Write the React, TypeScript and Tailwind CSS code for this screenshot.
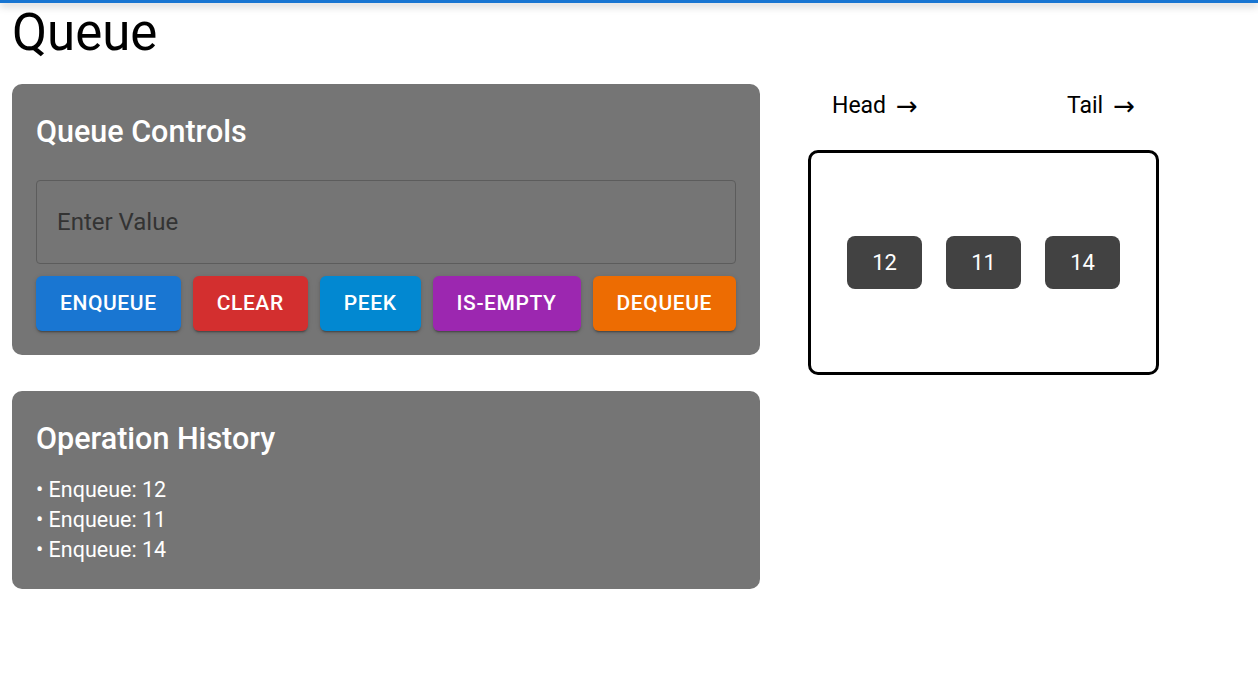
import React from "react";

const buttons = [
  { label: "Enqueue", cls: "bg-[#1976d2]" },
  { label: "Clear", cls: "bg-[#d32f2f]" },
  { label: "Peek", cls: "bg-[#0288d1]" },
  { label: "Is-Empty", cls: "bg-[#9c27b0]" },
  { label: "Dequeue", cls: "bg-[#ed6c02]" },
];

const queue = [12, 11, 14];

export default function App() {
  return (
    <div className="min-h-screen w-full bg-white text-black font-['Roboto',sans-serif]">
      <div className="h-[3px] w-full bg-[#1976d2] shadow-[0_2px_8px_rgba(0,0,0,0.35)]"></div>
      <div className="px-3">
        <h1 className="mt-[2px] text-[51px] leading-[56px] font-normal">Queue</h1>

        <div className="mt-[23px] flex items-start gap-12">
          {/* left column */}
          <div className="flex w-[748px] flex-col gap-9">
            <div className="rounded-[10px] bg-[#757575] px-6 pt-6 pb-6">
              <h2 className="text-[30.5px] leading-[48px] font-medium text-white">Queue Controls</h2>
              <input
                placeholder="Enter Value"
                className="mt-6 h-[84px] w-full rounded-[4px] border border-[#5c5c5c] bg-transparent px-[20px] text-[24px] text-[#222] outline-none placeholder:text-[#333]"
              />
              <div className="mt-3 flex justify-between">
                {buttons.map((b) => (
                  <button
                    key={b.label}
                    className={`h-[55px] rounded-[6px] px-6 text-[21px] font-medium uppercase tracking-[0.02857em] text-white shadow-[0_3px_1px_-2px_rgba(0,0,0,0.2),0_2px_2px_0_rgba(0,0,0,0.14),0_1px_5px_0_rgba(0,0,0,0.12)] ${b.cls}`}
                  >
                    {b.label}
                  </button>
                ))}
              </div>
            </div>

            <div className="rounded-[10px] bg-[#757575] px-6 pt-6 pb-[24px]">
              <h2 className="text-[30.5px] leading-[48px] font-medium text-white">Operation History</h2>
              <ul className="mt-[12px] text-[21.5px] leading-[30px] text-white">
                {queue.map((v) => (
                  <li key={v}>• Enqueue: {v}</li>
                ))}
              </ul>
            </div>
          </div>

          {/* right column */}
          <div className="flex w-[351px] flex-col">
            <div className="mt-[6px] flex h-[32px] items-center justify-between overflow-hidden px-6 text-[23px] leading-[32px]">
              <span className="flex items-center">
                Head
                <span className="ml-[10px] font-['DejaVu_Sans',sans-serif] text-[26px] leading-[32px]">→</span>
              </span>
              <span className="flex items-center">
                Tail
                <span className="ml-[10px] font-['DejaVu_Sans',sans-serif] text-[26px] leading-[32px]">→</span>
              </span>
            </div>
            <div className="mt-[28px] flex h-[225px] w-[351px] items-center justify-center gap-6 rounded-[10px] border-[3px] border-black">
              {queue.map((v) => (
                <div
                  key={v}
                  className="flex h-[53px] w-[75px] items-center justify-center rounded-[8px] bg-[#424242] text-[22px] text-white"
                >
                  {v}
                </div>
              ))}
            </div>
          </div>
        </div>
      </div>
    </div>
  );
}
